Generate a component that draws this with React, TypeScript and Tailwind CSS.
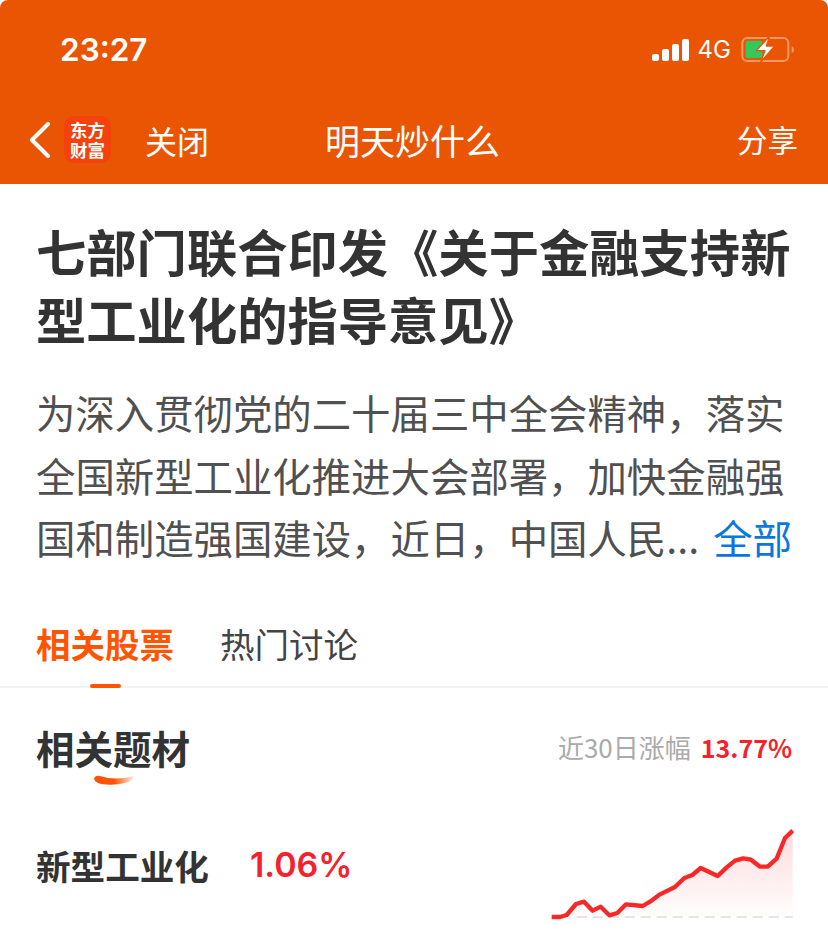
import React from 'react';

const cjk = { fontFamily: '"Noto Sans CJK SC", "Noto Sans", sans-serif' };

const StatusBar = () => (
  <div className="flex h-[100px] items-center justify-between pl-[60px] pr-[24px]">
    <span className="text-[31.5px] font-semibold leading-none text-white font-['Inter',sans-serif]">23:27</span>
    <div className="flex items-center">
      <div className="flex items-end gap-[3px]">
        <div className="h-[7px] w-[7px] rounded-[2px] bg-white" />
        <div className="h-[12px] w-[7px] rounded-[2px] bg-white" />
        <div className="h-[17px] w-[7px] rounded-[2px] bg-white" />
        <div className="h-[22px] w-[7px] rounded-[2px] bg-white" />
      </div>
      <span className="ml-[9px] text-[24px] leading-none text-white font-['Inter',sans-serif]">4G</span>
      <svg width="66" height="40" viewBox="330 30 198 120" className="ml-[7px]">
        <rect x="343" y="54" width="138" height="69" rx="15" fill="none" stroke="#fff" strokeOpacity="0.4" strokeWidth="6" />
        <rect x="353" y="62" width="50" height="52" rx="6" fill="#34c759" />
        <path d="M491 78 v22 q7 -3 7 -11 t-7 -11z" fill="#fff" fillOpacity="0.4" />
        <path d="M425 48 L385 92 H411 L398 126 L440 78 H415 Z" fill="#fff" stroke="#ea5504" strokeWidth="4" strokeLinejoin="round" />
      </svg>
    </div>
  </div>
);

const NavBar = () => (
  <div className="relative flex h-[84px] items-center pb-[5px] pl-[29px] pr-[30px]">
    <svg width="22" height="36" viewBox="0 0 22 36" fill="none">
      <path d="M19 2 L3 18 L19 34" stroke="#fff" strokeWidth="4" strokeLinecap="round" strokeLinejoin="round" />
    </svg>
    <div className="ml-[13px] flex h-[47px] w-[47px] flex-col items-center justify-center rounded-[10px] bg-[#f5410b] text-[17.5px] font-bold leading-[20px] text-white">
      <span>东方</span>
      <span>财富</span>
    </div>
    <span className="ml-[34px] text-[32px] leading-none text-white">关闭</span>
    <span className="absolute left-[325px] text-[35px] leading-none text-white">明天炒什么</span>
    <span className="ml-auto text-[30.5px] leading-none text-white">分享</span>
  </div>
);

const line = 'M65 321 L90 321 L110 315 L138 282 L162 275 L188 302 L212 290 L238 316 L262 309 L288 283 L338 288 L360 275 L390 253 L435 231 L463 204 L487 195 L512 174 L563 198 L590 172 L615 152 L640 145 L663 149 L690 170 L713 170 L740 146 L765 84 L788 62';

const SparkLine = () => (
  <svg width="298" height="133" viewBox="0 0 894 399" fill="none" className="absolute left-[530px] top-[810px]">
    <defs>
      <linearGradient id="area" x1="0" y1="62" x2="0" y2="321" gradientUnits="userSpaceOnUse">
        <stop offset="0" stopColor="#f5222d" stopOpacity="0.16" />
        <stop offset="1" stopColor="#f5222d" stopOpacity="0.01" />
      </linearGradient>
    </defs>
    <path d={line + ' V321 H65 Z'} fill="url(#area)" />
    <path d="M140 321 H788" stroke="#e5e5e5" strokeWidth="6" strokeDasharray="31 17" />
    <path d={line} stroke="#f82828" strokeWidth="13" strokeLinejoin="round" />
  </svg>
);

export default function App() {
  return (
    <div className="relative h-[943px] w-[828px] overflow-hidden bg-white" style={cjk}>
      <div className="rounded-tl-[8px] rounded-tr-[8px] bg-[#ea5504]">
        <StatusBar />
        <NavBar />
      </div>

      <div className="px-[36px] pt-[32px]">
        <h1 className="w-[770px] text-[50.3px] font-bold leading-[68px] text-[#333333]">
          七部门联合印发《关于金融支持新型工业化的指导意见》
        </h1>
        <div className="mt-[29px] text-[39.4px] leading-[62.5px] text-[#505050]">
          <p className="whitespace-nowrap">为深入贯彻党的二十届三中全会精神，落实</p>
          <p className="whitespace-nowrap">全国新型工业化推进大会部署，加快金融强</p>
          <p className="flex items-center justify-between whitespace-nowrap">
            <span>国和制造强国建设，近日，中国人民...</span>
            <span className="text-[#0a76e0]">全部</span>
          </p>
        </div>
      </div>

      <div className="relative mt-[42px] flex h-[77px] items-start gap-[46px] border-b-2 border-[#f2f2f2] px-[36px] pt-[7px] text-[34.5px] leading-[50px]">
        <span className="font-bold text-[#ff5500]">相关股票</span>
        <span className="text-[#444444]">热门讨论</span>
        <div className="absolute bottom-[-2px] left-[90px] h-[4px] w-[31px] rounded-full bg-[#ff5500]" />
      </div>

      <div className="flex items-start justify-between px-[36px] pt-[31px]">
        <div className="relative text-[38.5px] font-bold leading-[56px] text-[#333333]">
          相关题材
          <svg width="42" height="14" viewBox="0 0 42 14" className="absolute left-[57px] top-[55px]">
            <defs>
              <linearGradient id="smile" x1="0" y1="0" x2="1" y2="0">
                <stop offset="0" stopColor="#ff5500" />
                <stop offset="0.5" stopColor="#ff5500" />
                <stop offset="1" stopColor="#ff5500" stopOpacity="0.1" />
              </linearGradient>
            </defs>
            <path d="M1 4 Q3 1 7 2 Q22 7 41 2 Q40 7 32 9 Q20 12 8 10 Q1 8 1 4 Z" fill="url(#smile)" />
          </svg>
        </div>
        <div className="flex items-center gap-[10px] pt-[13px] leading-[30px]">
          <span className="text-[26px] text-[#aaaaaa]">近30日涨幅</span>
          <span className="text-[25px] font-bold text-[#f5222d]">13.77%</span>
        </div>
      </div>

      <div className="mt-[65px] flex items-center px-[36px]">
        <span className="text-[34.6px] font-bold leading-[50px] text-[#333333]">新型工业化</span>
        <span className="ml-[41px] text-[34px] font-semibold leading-[50px] text-[#f5222d] font-['Inter',sans-serif]">1.06%</span>
      </div>

      <SparkLine />
    </div>
  );
}
